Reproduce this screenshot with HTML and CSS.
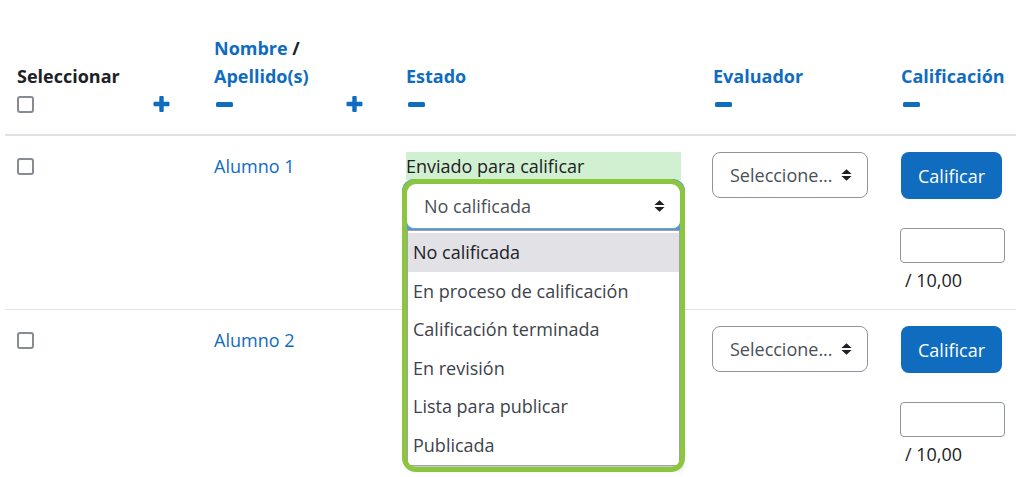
FILE: index.html
```html
<!DOCTYPE html>
<html lang="es">
<head>
<meta charset="utf-8">
<title>Calificación</title>
<link rel="stylesheet" href="styles.css">
</head>
<body>
<table class="grading">
  <colgroup>
    <col class="c-sel"><col class="c-pic"><col class="c-name"><col class="c-email"><col class="c-status"><col class="c-grader"><col class="c-grade">
  </colgroup>
  <thead>
    <tr>
      <th>
        <div class="hd">Seleccionar</div>
        <div class="icons"><span class="cb"></span></div>
      </th>
      <th>
        <div class="icons"><svg class="plus" viewBox="0 0 16 16"><rect x="0" y="5.8" width="16" height="4.4" rx="1"/><rect x="5.8" y="0" width="4.4" height="16" rx="1"/></svg></div>
      </th>
      <th>
        <div class="hd"><a href="#">Nombre</a> / <a href="#">Apellido(s)</a></div>
        <div class="icons"><svg class="minus" viewBox="0 0 17 5"><rect x="0" y="0" width="17" height="5" rx="1.5"/></svg></div>
      </th>
      <th>
        <div class="icons"><svg class="plus" viewBox="0 0 16 16"><rect x="0" y="5.8" width="16" height="4.4" rx="1"/><rect x="5.8" y="0" width="4.4" height="16" rx="1"/></svg></div>
      </th>
      <th>
        <div class="hd"><a href="#">Estado</a></div>
        <div class="icons"><svg class="minus" viewBox="0 0 17 5"><rect x="0" y="0" width="17" height="5" rx="1.5"/></svg></div>
      </th>
      <th>
        <div class="hd"><a href="#">Evaluador</a></div>
        <div class="icons"><svg class="minus" viewBox="0 0 17 5"><rect x="0" y="0" width="17" height="5" rx="1.5"/></svg></div>
      </th>
      <th>
        <div class="hd"><a href="#">Calificación</a></div>
        <div class="icons"><svg class="minus" viewBox="0 0 17 5"><rect x="0" y="0" width="17" height="5" rx="1.5"/></svg></div>
      </th>
    </tr>
  </thead>
  <tbody>
    <tr>
      <td><div class="line"><span class="cb"></span></div></td>
      <td></td>
      <td><a href="#">Alumno 1</a></td>
      <td></td>
      <td class="status-cell">
        <div class="status">Enviado para calificar</div>
        <div class="selwrap open">
          <div class="select focus"><span>No calificada</span><svg class="arrow" viewBox="0 0 11 12"><path d="M5.5 0.3 L10.6 5 H0.4 Z M0.4 7 H10.6 L5.5 11.7 Z"/></svg></div>
          <ul class="dropdown">
            <li class="hl">No calificada</li>
            <li>En proceso de calificación</li>
            <li>Calificación terminada</li>
            <li>En revisión</li>
            <li>Lista para publicar</li>
            <li>Publicada</li>
          </ul>
          <div class="annot"></div>
        </div>
      </td>
      <td>
        <div class="select eval"><span>Seleccione...</span><svg class="arrow" viewBox="0 0 11 12"><path d="M5.5 0.3 L10.6 5 H0.4 Z M0.4 7 H10.6 L5.5 11.7 Z"/></svg></div>
      </td>
      <td>
        <button class="btn" type="button">Calificar</button>
        <input class="grade" type="text" aria-label="Calificación">
        <div class="outof">/ 10,00</div>
      </td>
    </tr>
    <tr>
      <td><div class="line"><span class="cb"></span></div></td>
      <td></td>
      <td><a href="#">Alumno 2</a></td>
      <td></td>
      <td class="status-cell"></td>
      <td>
        <div class="select eval"><span>Seleccione...</span><svg class="arrow" viewBox="0 0 11 12"><path d="M5.5 0.3 L10.6 5 H0.4 Z M0.4 7 H10.6 L5.5 11.7 Z"/></svg></div>
      </td>
      <td>
        <button class="btn" type="button">Calificar</button>
        <input class="grade" type="text" aria-label="Calificación">
        <div class="outof">/ 10,00</div>
      </td>
    </tr>
  </tbody>
</table>
</body>
</html>
```

FILE: styles.css
```css
* { box-sizing: border-box; }

html, body { height: 100%; }

body {
  margin: 0;
  font-family: "Open Sans", "Noto Sans", sans-serif;
  font-size: 18px;
  line-height: 28px;
  color: #1d2125;
  background: #fff;
  overflow: hidden;
}

a { color: #0f6cbf; text-decoration: none; }

.grading {
  border-collapse: collapse;
  table-layout: fixed;
  width: 1011px;
  margin: 34px 0 0 5px;
}

.c-sel { width: 136px; }
.c-pic { width: 61px; }
.c-name { width: 132px; }
.c-email { width: 60px; }
.c-status { width: 307px; }
.c-grader { width: 188px; }
.c-grade { width: 127px; }

th {
  padding: 0 12px 16px;
  text-align: left;
  vertical-align: bottom;
  font-weight: 700;
  border-bottom: 2px solid #dee2e6;
}

td {
  padding: 16px 12px 15px;
  vertical-align: top;
  border-bottom: 1px solid #dee2e6;
}

tbody tr:last-child td { border-bottom: none; }

.icons {
  height: 28px;
  display: flex;
  align-items: center;
}

.plus { width: 17px; height: 16px; fill: #0f6cbf; display: block; }
.minus { width: 17px; height: 5px; fill: #0f6cbf; display: block; margin-left: 2px; }

.cb {
  display: inline-block;
  width: 17px;
  height: 17px;
  border: 2px solid #868b94;
  border-radius: 3px;
  background: #fff;
}

.line {
  height: 28px;
  display: flex;
  align-items: center;
}

.status {
  width: 275px;
  background: #d1f0d1;
}

.selwrap {
  position: relative;
  width: 275px;
  margin-top: 3px;
}

.selwrap.open { z-index: 5; }

.select {
  display: flex;
  align-items: center;
  justify-content: space-between;
  height: 46px;
  border: 1px solid #8f959e;
  border-radius: 8px;
  padding: 0 15px 0 17px;
  color: #495057;
  background: #fff;
}

.select.focus {
  border-color: #6fa6da;
  box-shadow: 0 0 0 4px rgba(15, 108, 191, 0.7);
}

.arrow { width: 11px; height: 12px; fill: #1d2125; flex: none; }

.dropdown {
  position: absolute;
  top: 47px;
  left: 1px;
  right: 1px;
  margin: 0;
  padding: 2px 0 0;
  list-style: none;
  background: #fff;
  border: 1px solid #9fa3a8;
  box-shadow: 2px 3px 5px rgba(0, 0, 0, 0.25);
}

.dropdown li {
  height: 38.6px;
  line-height: 38.6px;
  padding-left: 5px;
  color: #3d434a;
}

.dropdown li.hl {
  background: #e1e1e6;
  color: #1d2125;
}

.annot {
  position: absolute;
  top: -4px;
  left: -4px;
  right: -4px;
  height: 293px;
  border: 5px solid #8cc63f;
  border-radius: 14px;
  pointer-events: none;
}

.eval { width: 156px; margin-left: -1px; }

.btn {
  display: block;
  height: 47px;
  padding: 0 17px;
  background: #0f6cbf;
  color: #fff;
  border: 0;
  border-radius: 8px;
  font: inherit;
}

.grade {
  display: block;
  width: 105px;
  height: 35px;
  margin: 29px 0 0 -1px;
  border: 1px solid #8f959e;
  border-radius: 4px;
  background: #fff;
}

.outof {
  margin-top: 3px;
  padding-left: 4px;
}
```
